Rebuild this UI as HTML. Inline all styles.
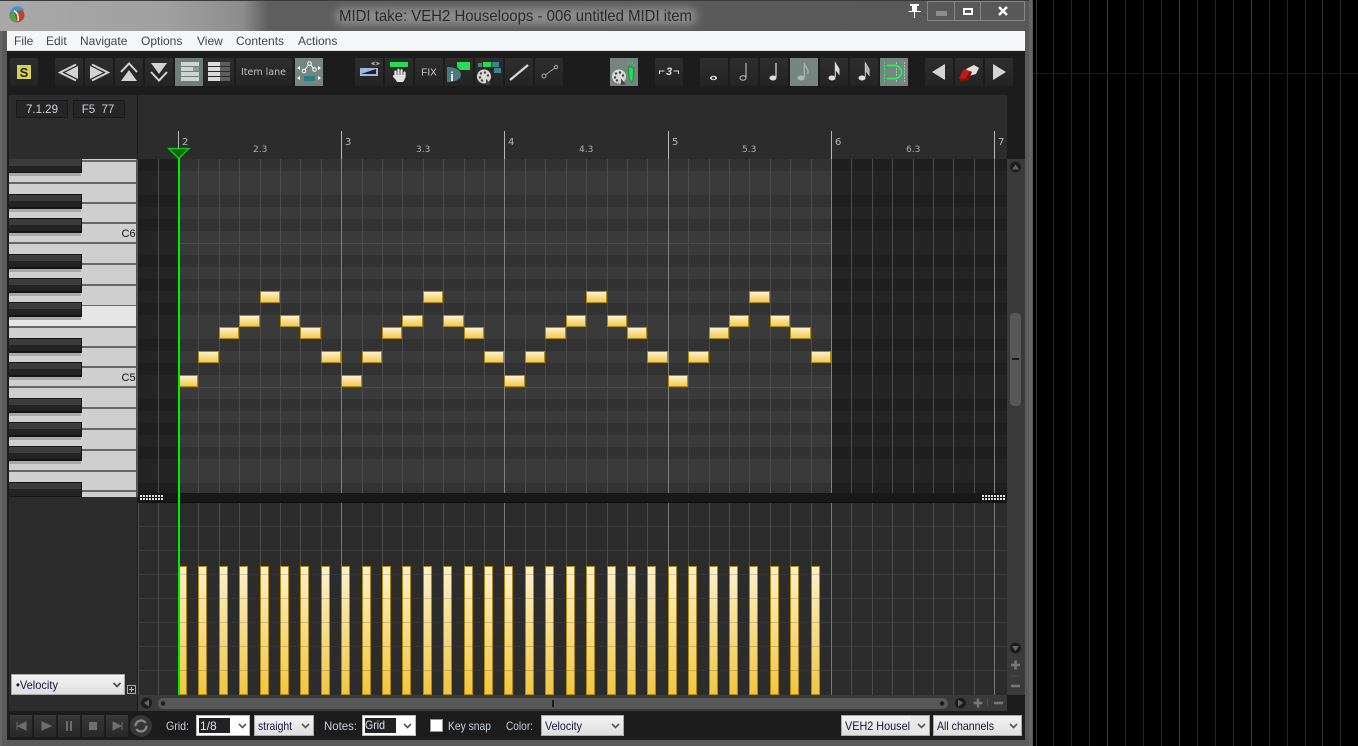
<!DOCTYPE html>
<html><head><meta charset="utf-8"><title>MIDI take</title>
<style>
html,body{margin:0;padding:0;background:#000;width:1358px;height:746px;overflow:hidden}
svg{display:block;position:absolute;left:0;top:0}
text{font-family:"Liberation Sans",sans-serif}
.c{shape-rendering:crispEdges}
.n{fill:url(#ng);stroke:#b08a10;stroke-width:1}
.v{fill:url(#vg);stroke:#b08a10;stroke-width:1}
.b{fill:url(#bg)}
.a{fill:#75857f}
.m{font-size:12px;fill:#444}
.r{font-family:"DejaVu Sans",sans-serif;font-size:9px;fill:#b0b0b0}
.q{font-family:"DejaVu Sans",sans-serif;font-size:10px;fill:#b8b8b8}
.l{font-size:12px;fill:#c8d0d8}
.s{font-size:12px;fill:#14143c}
</style></head><body>
<svg width="1358" height="746" viewBox="0 0 1358 746" xmlns="http://www.w3.org/2000/svg">
<defs>
<linearGradient id="ng" x1="0" y1="0" x2="0" y2="1"><stop offset="0" stop-color="#fdf2cc"/><stop offset="1" stop-color="#f1c94e"/></linearGradient>
<linearGradient id="vg" x1="0" y1="0" x2="0" y2="1"><stop offset="0" stop-color="#fcf1cc"/><stop offset="1" stop-color="#f1c63f"/></linearGradient>
<linearGradient id="bg" x1="0" y1="0" x2="0" y2="1"><stop offset="0" stop-color="#2e2e2e"/><stop offset="1" stop-color="#242424"/></linearGradient>
<linearGradient id="sel" x1="0" y1="0" x2="0" y2="1"><stop offset="0" stop-color="#f4f4f4"/><stop offset="1" stop-color="#dedede"/></linearGradient>
<linearGradient id="tb" x1="0" y1="0" x2="1" y2="0"><stop offset="0" stop-color="#a8a8a8"/><stop offset=".16" stop-color="#a0a0a0"/><stop offset=".235" stop-color="#8c8c8c"/><stop offset=".26" stop-color="#5e5e5e"/><stop offset="1" stop-color="#585858"/></linearGradient>
<linearGradient id="tr" x1="0" y1="0" x2="0" y2="1"><stop offset="0" stop-color="#383838"/><stop offset="1" stop-color="#282828"/></linearGradient>
<filter id="gl" x="-10%" y="-100%" width="120%" height="300%"><feGaussianBlur stdDeviation="4"/></filter>
<g id="bk" class="c"><rect x="9" y="14" width="72" height="4" fill="#a8a8a8"/><rect x="9" y="0" width="73" height="15" fill="#161616"/><rect x="9" y="1" width="72" height="6" fill="#3c3c3c"/><rect x="9" y="7" width="72" height="6" fill="#232323"/></g>
<g id="pal"><ellipse cx="0" cy="0" rx="7" ry="7" fill="#d8d8d8"/><circle cx="-3" cy="-3" r="1.200" fill="#444"/><circle cx="1" cy="-4" r="1.200" fill="#444"/><circle cx="-4" cy="1" r="1.200" fill="#444"/><circle cx="-2" cy="4" r="1.200" fill="#444"/><circle cx="4" cy="-1" r="1.200" fill="#444"/><path d="M2 2l5 6h-5z" fill="#444"/></g>
</defs>

<!-- desktop right -->
<rect width="1358" height="746" fill="#000"/>
<path class="c" stroke="#272727" d="M1053.500 0V746M1071.500 0V746M1089.500 0V746M1125.500 0V746M1143.500 0V746M1161.500 0V746M1197.500 0V746M1215.500 0V746M1233.500 0V746M1269.500 0V746M1287.500 0V746M1305.500 0V746M1340.500 0V746"/>
<path class="c" stroke="#363636" d="M1036.500 0V746M1107.500 0V746M1179.500 0V746M1251.500 0V746M1322.500 0V746"/>
<path class="c" stroke="#1b1b1b" d="M1033 73.500H1358"/>

<!-- window frame -->
<rect x="0" y="0" width="1033" height="746" fill="#5a5a5a" class="c"/>
<rect x="0" y="0" width="1033" height="31" fill="url(#tb)" class="c"/>
<rect x="0" y="0" width="1033" height="1" fill="#3a3a3a" class="c"/>
<rect x="1029" y="0" width="3" height="746" fill="#666" class="c"/>
<rect x="0" y="31" width="2" height="715" fill="#666" class="c"/>
<!-- title -->
<rect x="335" y="8" width="362" height="17" rx="8" fill="#8a8a8a" filter="url(#gl)"/>
<text x="339" y="21" font-size="16" fill="#2a2a2a" textLength="353" lengthAdjust="spacingAndGlyphs">MIDI take: VEH2 Houseloops - 006 untitled MIDI item</text>
<!-- app icon -->
<circle cx="17" cy="15" r="7.500" fill="#b04a30"/>
<path d="M10 13a7.500 7.500 0 0 1 14-3l-8 1z" fill="#3a9ad0"/>
<path d="M10 14c0 5 3 8 7 8l-3-10z" fill="#3fae49"/>
<path d="M14 11c3 1 5 5 4 10" stroke="#eee" stroke-width="1.500" fill="none"/>
<!-- pin -->
<path d="M908.500 11.500H921M914.500 11V18" stroke="#fff" stroke-width="1.400" fill="none" class="c"/>
<rect x="910" y="4" width="9" height="2" fill="#fff" class="c"/>
<rect x="912" y="5" width="5" height="6" fill="#fff" class="c"/>
<!-- window controls -->
<g class="c" fill="none" stroke="#888"><rect x="927.500" y="1.500" width="27" height="19"/><rect x="954.500" y="1.500" width="26" height="19"/><rect x="980.500" y="1.500" width="44" height="19"/></g>
<rect x="936" y="11" width="11" height="5" fill="#8c8c8c" class="c"/>
<rect x="964" y="9" width="8" height="5" fill="none" stroke="#fff" stroke-width="2" class="c"/>
<path d="M999 7l8 8M1007 7l-8 8" stroke="#fff" stroke-width="2.400"/>

<!-- menu -->
<rect x="7" y="31" width="1018" height="19" fill="#f5f6f8" class="c"/>
<rect x="7" y="50" width="1018" height="1" fill="#e2e2e2" class="c"/>
<text class="m" x="14" y="45">File</text><text class="m" x="46" y="45">Edit</text><text class="m" x="80" y="45">Navigate</text><text class="m" x="141" y="45">Options</text><text class="m" x="197" y="45">View</text><text class="m" x="236" y="45">Contents</text><text class="m" x="298" y="45">Actions</text>

<!-- body -->
<rect x="7" y="51" width="1018" height="689" fill="#1c1c1c" class="c"/>
<rect x="9" y="95" width="998" height="616" fill="#2c2c2c" class="c"/>

<!-- toolbar buttons -->
<g class="c">
<rect class="b" x="10" y="58" width="28" height="28"/><rect class="b" x="55" y="58" width="28" height="28"/><rect class="b" x="85" y="58" width="28" height="28"/><rect class="b" x="115" y="58" width="28" height="28"/><rect class="b" x="145" y="58" width="28" height="28"/>
<rect x="175" y="58" width="28" height="28" fill="#6e7e79"/><rect class="b" x="204" y="58" width="30" height="28"/>
<rect class="b" x="236" y="58" width="56" height="28"/><rect class="a" x="295" y="58" width="28" height="28"/>
<rect class="b" x="355" y="58" width="28" height="28"/><rect class="b" x="385" y="58" width="28" height="28"/><rect class="b" x="415" y="58" width="28" height="28"/><rect class="b" x="445" y="58" width="28" height="28"/><rect class="b" x="475" y="58" width="28" height="28"/><rect class="b" x="505" y="58" width="28" height="28"/><rect class="b" x="535" y="58" width="28" height="28"/>
<rect class="a" x="610" y="58" width="28" height="28"/><rect class="b" x="655" y="58" width="28" height="28"/>
<rect class="b" x="700" y="58" width="28" height="28"/><rect class="b" x="730" y="58" width="28" height="28"/><rect class="b" x="760" y="58" width="28" height="28"/><rect class="a" x="790" y="58" width="28" height="28"/><rect class="b" x="820" y="58" width="28" height="28"/><rect class="b" x="850" y="58" width="28" height="28"/><rect class="a" x="880" y="58" width="28" height="28"/>
<rect class="b" x="925" y="58" width="28" height="28"/><rect class="b" x="955" y="58" width="28" height="28"/><rect class="b" x="985" y="58" width="28" height="28"/>
</g>
<!-- S -->
<rect x="17" y="65" width="14" height="14" fill="#d9d24e" class="c"/>
<text x="24" y="77" font-size="13" font-weight="bold" text-anchor="middle" fill="#222">S</text>
<!-- arrows -->
<g fill="#d2d2d2" stroke="none">
<path d="M78 66l-13 6.500 13 6.500z"/><path d="M90 66l13 6.500-13 6.500z"/>
<path d="M121 81h16l-8-11z"/><path d="M151 63h16l-8 11z"/>
</g>
<g fill="none" stroke="#d2d2d2" stroke-width="2">
<path d="M76 64.500l-16 8 16 8"/><path d="M92 64.500l16 8-16 8"/>
<path d="M121 72l8-8.500 8 8.500"/><path d="M151 72l8 8.500 8-8.500"/>
</g>
<!-- piano view -->
<g class="c">
<rect x="181" y="62" width="18" height="4" fill="#ced4d0"/><rect x="181" y="67" width="12" height="4" fill="#ced4d0"/><rect x="181" y="72" width="18" height="4" fill="#ced4d0"/><rect x="181" y="77" width="18" height="4" fill="#ced4d0"/><rect x="193" y="67" width="6" height="4" fill="#8f9b97"/>
<rect x="208" y="62" width="12" height="4" fill="#dcdcdc"/><rect x="208" y="67" width="12" height="4" fill="#dcdcdc"/><rect x="208" y="72" width="12" height="4" fill="#dcdcdc"/><rect x="208" y="77" width="12" height="4" fill="#dcdcdc"/>
<rect x="220" y="62" width="10" height="4" fill="#5e5e5e"/><rect x="220" y="67" width="10" height="4" fill="#5e5e5e"/><rect x="220" y="72" width="10" height="4" fill="#5e5e5e"/><rect x="220" y="77" width="10" height="4" fill="#5e5e5e"/>
</g>
<text x="241" y="75" style="font-family:'DejaVu Sans',sans-serif" font-size="9.500" fill="#c0c0c0" textLength="45">Item lane</text>
<!-- env -->
<path d="M304 71L309.500 63.500L314.500 69.500" stroke="#fff" fill="none"/><circle cx="304" cy="71" r="1.800" fill="#75857f" stroke="#fff"/><circle cx="309.500" cy="63.500" r="1.800" fill="#75857f" stroke="#fff"/><circle cx="314.500" cy="69.500" r="1.800" fill="#75857f" stroke="#fff"/>
<path d="M300 66l-3 2 3 2zM318 66l3 2-3 2zM300 76l-3 2 3 2zM318 76l3 2-3 2z" fill="#fff"/>
<rect x="304" y="76" width="11" height="5" fill="#2f7f80" class="c"/>
<!-- eye + stairs -->
<rect x="360" y="68" width="18" height="8" fill="#9fb6de" class="c"/><path d="M361 74l15-5v5z" fill="#202020"/>
<path d="M371 63.500q4-3.500 9 0q-5 3.500-9 0z" fill="#aaa"/><circle cx="375.500" cy="63.500" r="1.300" fill="#222"/>
<!-- hand -->
<rect x="390" y="62" width="18" height="5" fill="#22dd55" class="c"/>
<g stroke="#e2e2e2" stroke-width="2.300" stroke-linecap="round" fill="none"><path d="M395.500 77V71.500M398.500 77V69.800M401.500 77V70.300M404.500 77V72.500"/></g>
<path d="M394.500 75h11c0 3-1 5-2.500 7h-6c-1-2-2-3-4-6.500z" fill="#e2e2e2"/>
<path d="M393.500 75.500l2.500 3" stroke="#e2e2e2" stroke-width="2.200"/>
<text x="429" y="75.500" font-size="10" text-anchor="middle" fill="#c8c8c8">FIX</text>
<!-- i -->
<path d="M447 82V67C455 67 461 70 461 75C461 79 456 82 447 82z" fill="#4a7a7c"/>
<path d="M457 62h13v8h-10l-3-3z" fill="#22dd55"/>
<text x="452" y="81" font-size="13" font-weight="bold" text-anchor="middle" fill="#f0f0f0">i</text>
<!-- palette chips -->
<g class="c"><rect x="478" y="63" width="4" height="4" fill="#3f8587"/><rect x="483" y="62" width="8" height="5" fill="#22dd55"/><rect x="492" y="62" width="7" height="5" fill="#3f8587"/><rect x="494" y="68" width="7" height="5" fill="#3f8587"/></g>
<use href="#pal" x="484" y="76.500"/>
<!-- lines -->
<path d="M510 80l18-15" stroke="#d8d8d8" stroke-width="2.200"/>
<path d="M544 76l12-9" stroke="#999" stroke-width="1"/><circle cx="544" cy="76" r="2" fill="#262626" stroke="#aaa"/><circle cx="556" cy="67" r="1.600" fill="#262626" stroke="#aaa"/>
<!-- palette foot -->
<use href="#pal" x="619" y="76.500"/>
<path d="M629 67c4-1 5 2 4.500 6-.5 4 .5 7-1.500 9-3-1-3-4-3-7 0-3-1.500-6 0-8z" fill="#22dd55" stroke="#1a8f3a"/>
<path d="M627 64h1M629.500 62.500h1M632 63h1M634 65h1" stroke="#3ddf6a" stroke-width="1.500"/>
<!-- triplet -->
<path d="M659.500 74v-3h5M678.500 74v-3h-5" stroke="#ddd" fill="none" class="c"/>
<text x="669" y="75" font-size="11" font-weight="bold" font-style="italic" text-anchor="middle" fill="#ddd">3</text>
<!-- notes -->
<ellipse cx="713.500" cy="78" rx="3.500" ry="2.200" fill="#ddd"/><ellipse cx="713.500" cy="78" rx="1.500" ry="1.300" fill="#333"/>
<ellipse cx="743" cy="78" rx="3" ry="2.200" fill="none" stroke="#bbb"/><path d="M746 77V63" stroke="#ccc"/>
<ellipse cx="773" cy="78" rx="3.500" ry="2.500" fill="#ddd"/><path d="M776 77V63" stroke="#ddd" stroke-width="1.200"/>
<ellipse cx="801" cy="78" rx="3.500" ry="2.500" fill="#b0b8b4"/><path d="M804.300 77V63c0 4 5 5 3.500 11" stroke="#b0b8b4" stroke-width="1.200" fill="none"/>
<ellipse cx="832" cy="78" rx="3.500" ry="2.500" fill="#ddd"/><path d="M835.300 77V63l3.700 6v5l-3.700-5z" stroke="#ddd" fill="#ddd"/>
<ellipse cx="862" cy="78" rx="3.500" ry="2.500" fill="#ddd"/><path d="M865.300 77V63l3.700 6v6l-3.700-5z" stroke="#ccc" fill="#aaa"/>
<!-- snap -->
<path d="M884.500 62V82" stroke="#3ddf6a" stroke-dasharray="2 1" fill="none"/>
<path d="M896.500 62V82M904.500 62V82" stroke="#b4c0bc" stroke-dasharray="2 1" fill="none"/>
<path d="M887 65.500h8a6.500 6.500 0 0 1 0 13h-8" stroke="#22ee55" stroke-width="2" fill="none"/>
<!-- left, eraser, right -->
<path d="M932 72l13-8v16z" fill="#d4d4d4"/>
<path d="M966 69l8-4 5 3-3 6-7 2z" fill="#e0e0e0"/><path d="M959 78l5-9 8 3-4 8-7 1z" fill="#cc1515"/><path d="M961 81l7-1 4-8-2-1-5 8-5-1z" fill="#8c0f0f"/>
<path d="M993 64l13 8-13 8z" fill="#d4d4d4"/>

<!-- readouts -->
<g class="c"><rect x="16.500" y="100.500" width="51" height="17" fill="#262626" stroke="#1a1a1a"/><rect x="73.500" y="100.500" width="51" height="17" fill="#262626" stroke="#1a1a1a"/></g>
<text x="42" y="113" font-size="11.500" text-anchor="middle" fill="#c8d4dc">7.1.29</text>
<text x="98" y="113" font-size="11.500" text-anchor="middle" fill="#c8d4dc" xml:space="preserve">F5  77</text>

<!-- left panel + piano -->
<rect x="137" y="95" width="1" height="616" fill="#1a1a1a" class="c"/>
<rect x="9" y="159" width="127" height="338" fill="#cfcfcf" class="c"/>
<rect x="136" y="159" width="2" height="338" fill="#555" class="c"/>
<rect x="9" y="306" width="127" height="21" fill="#e6e6e6" class="c"/>
<g class="c" fill="#666">
<rect x="81" y="160" width="55" height="2"/><rect x="9" y="182" width="127" height="2"/><rect x="81" y="202" width="55" height="2"/><rect x="81" y="222" width="55" height="2"/><rect x="9" y="242" width="127" height="2"/><rect x="81" y="263" width="55" height="2"/><rect x="81" y="284" width="55" height="2"/><rect x="81" y="305" width="55" height="1"/><rect x="9" y="326" width="127" height="2"/><rect x="81" y="346" width="55" height="2"/><rect x="81" y="366" width="55" height="2"/><rect x="9" y="386" width="127" height="2"/><rect x="81" y="407" width="55" height="2"/><rect x="81" y="428" width="55" height="2"/><rect x="81" y="449" width="55" height="2"/><rect x="9" y="470" width="127" height="2"/><rect x="81" y="490" width="55" height="2"/>
</g>
<g class="c"><rect x="9" y="159" width="73" height="14" fill="#161616"/><rect x="9" y="159" width="72" height="7" fill="#3c3c3c"/><rect x="9" y="166" width="72" height="6" fill="#232323"/><rect x="9" y="173" width="72" height="3" fill="#a8a8a8"/></g>
<use href="#bk" y="194"/><use href="#bk" y="218"/><use href="#bk" y="254"/><use href="#bk" y="278"/><use href="#bk" y="302"/><use href="#bk" y="338"/><use href="#bk" y="362"/><use href="#bk" y="398"/><use href="#bk" y="422"/><use href="#bk" y="446"/>
<g class="c"><rect x="9" y="482" width="73" height="15" fill="#161616"/><rect x="9" y="483" width="72" height="6" fill="#3c3c3c"/><rect x="9" y="489" width="72" height="7" fill="#232323"/></g>
<text x="121.500" y="237" font-size="11" fill="#111">C6</text>
<text x="121.500" y="381" font-size="11" fill="#111">C5</text>

<!-- piano roll background -->
<g class="c">
<rect x="138" y="159" width="869" height="334" fill="#242424"/>
<rect x="178" y="159" width="653" height="334" fill="#3a3a3a"/>
<g fill="#000" fill-opacity=".12">
<rect x="138" y="159" width="869" height="12"/><rect x="138" y="195" width="869" height="12"/><rect x="138" y="219" width="869" height="12"/><rect x="138" y="255" width="869" height="12"/><rect x="138" y="279" width="869" height="12"/><rect x="138" y="303" width="869" height="12"/><rect x="138" y="339" width="869" height="12"/><rect x="138" y="363" width="869" height="12"/><rect x="138" y="399" width="869" height="12"/><rect x="138" y="423" width="869" height="12"/><rect x="138" y="447" width="869" height="12"/><rect x="138" y="483" width="869" height="10"/>
</g>
<path stroke="#4c4c4c" d="M178 243.500H831M178 387.500H831"/>
<path stroke="#4c4c4c" d="M158.500 159V493M198.500 159V493M219.500 159V493M239.500 159V493M260.500 159V493M280.500 159V493M300.500 159V493M321.500 159V493M362.500 159V493M382.500 159V493M402.500 159V493M423.500 159V493M443.500 159V493M464.500 159V493M484.500 159V493M525.500 159V493M545.500 159V493M566.500 159V493M586.500 159V493M607.500 159V493M627.500 159V493M647.500 159V493M688.500 159V493M709.500 159V493M729.500 159V493M749.500 159V493M770.500 159V493M790.500 159V493M811.500 159V493M851.500 159V493M872.500 159V493M892.500 159V493M913.500 159V493M933.500 159V493M953.500 159V493M974.500 159V493"/>
<path stroke="#808080" d="M341.500 159V493M504.500 159V493M668.500 159V493M831.500 159V493M994.500 159V493"/>

<!-- ruler lines -->
<path stroke="#b8b8b8" d="M178.500 131V159M341.500 131V159M504.500 131V159M668.500 131V159M831.500 131V159M994.500 131V159"/>
<!-- separator -->
<rect x="138" y="493" width="869" height="9" fill="#181818"/>
<rect x="138" y="502" width="869" height="1" fill="#0c0c0c"/>
<path stroke="#e0e0e0" stroke-width="2" stroke-dasharray="2 1" d="M140 496H163M140 499H163M982 496H1005M982 499H1005"/>

<!-- velocity lane bg -->
<rect x="138" y="503" width="869" height="192" fill="#2c2c2c"/>
<path stroke="#3f3f3f" d="M138 526.500H1007M138 550.500H1007M138 574.500H1007M138 598.500H1007M138 622.500H1007M138 646.500H1007M138 670.500H1007"/>
<path stroke="#4c4c4c" d="M158.500 503V695M198.500 503V695M219.500 503V695M239.500 503V695M260.500 503V695M280.500 503V695M300.500 503V695M321.500 503V695M362.500 503V695M382.500 503V695M402.500 503V695M423.500 503V695M443.500 503V695M464.500 503V695M484.500 503V695M525.500 503V695M545.500 503V695M566.500 503V695M586.500 503V695M607.500 503V695M627.500 503V695M647.500 503V695M688.500 503V695M709.500 503V695M729.500 503V695M749.500 503V695M770.500 503V695M790.500 503V695M811.500 503V695M851.500 503V695M872.500 503V695M892.500 503V695M913.500 503V695M933.500 503V695M953.500 503V695M974.500 503V695"/>
<path stroke="#777" d="M341.500 503V695M504.500 503V695M668.500 503V695M831.500 503V695M994.500 503V695"/>
<rect x="138" y="503" width="1" height="192" fill="#555"/>

<!-- notes -->
<rect class="n" x="178.500" y="375.500" width="19" height="11"/><rect class="n" x="198.500" y="351.500" width="20" height="11"/><rect class="n" x="219.500" y="327.500" width="19" height="11"/><rect class="n" x="239.500" y="315.500" width="20" height="11"/><rect class="n" x="260.500" y="291.500" width="19" height="11"/><rect class="n" x="280.500" y="315.500" width="19" height="11"/><rect class="n" x="300.500" y="327.500" width="20" height="11"/><rect class="n" x="321.500" y="351.500" width="19" height="11"/>
<rect class="n" x="341.500" y="375.500" width="20" height="11"/><rect class="n" x="362.500" y="351.500" width="19" height="11"/><rect class="n" x="382.500" y="327.500" width="19" height="11"/><rect class="n" x="402.500" y="315.500" width="20" height="11"/><rect class="n" x="423.500" y="291.500" width="19" height="11"/><rect class="n" x="443.500" y="315.500" width="20" height="11"/><rect class="n" x="464.500" y="327.500" width="19" height="11"/><rect class="n" x="484.500" y="351.500" width="19" height="11"/>
<rect class="n" x="504.500" y="375.500" width="20" height="11"/><rect class="n" x="525.500" y="351.500" width="19" height="11"/><rect class="n" x="545.500" y="327.500" width="20" height="11"/><rect class="n" x="566.500" y="315.500" width="19" height="11"/><rect class="n" x="586.500" y="291.500" width="20" height="11"/><rect class="n" x="607.500" y="315.500" width="19" height="11"/><rect class="n" x="627.500" y="327.500" width="19" height="11"/><rect class="n" x="647.500" y="351.500" width="20" height="11"/>
<rect class="n" x="668.500" y="375.500" width="19" height="11"/><rect class="n" x="688.500" y="351.500" width="20" height="11"/><rect class="n" x="709.500" y="327.500" width="19" height="11"/><rect class="n" x="729.500" y="315.500" width="19" height="11"/><rect class="n" x="749.500" y="291.500" width="20" height="11"/><rect class="n" x="770.500" y="315.500" width="19" height="11"/><rect class="n" x="790.500" y="327.500" width="20" height="11"/><rect class="n" x="811.500" y="351.500" width="19" height="11"/>

<!-- velocity bars -->
<g>
<rect class="v" x="178.500" y="566.500" width="8" height="128"/><rect class="v" x="198.500" y="566.500" width="8" height="128"/><rect class="v" x="219.500" y="566.500" width="8" height="128"/><rect class="v" x="239.500" y="566.500" width="8" height="128"/><rect class="v" x="260.500" y="566.500" width="8" height="128"/><rect class="v" x="280.500" y="566.500" width="8" height="128"/><rect class="v" x="300.500" y="566.500" width="8" height="128"/><rect class="v" x="321.500" y="566.500" width="8" height="128"/>
<rect class="v" x="341.500" y="566.500" width="8" height="128"/><rect class="v" x="362.500" y="566.500" width="8" height="128"/><rect class="v" x="382.500" y="566.500" width="8" height="128"/><rect class="v" x="402.500" y="566.500" width="8" height="128"/><rect class="v" x="423.500" y="566.500" width="8" height="128"/><rect class="v" x="443.500" y="566.500" width="8" height="128"/><rect class="v" x="464.500" y="566.500" width="8" height="128"/><rect class="v" x="484.500" y="566.500" width="8" height="128"/>
<rect class="v" x="504.500" y="566.500" width="8" height="128"/><rect class="v" x="525.500" y="566.500" width="8" height="128"/><rect class="v" x="545.500" y="566.500" width="8" height="128"/><rect class="v" x="566.500" y="566.500" width="8" height="128"/><rect class="v" x="586.500" y="566.500" width="8" height="128"/><rect class="v" x="607.500" y="566.500" width="8" height="128"/><rect class="v" x="627.500" y="566.500" width="8" height="128"/><rect class="v" x="647.500" y="566.500" width="8" height="128"/>
<rect class="v" x="668.500" y="566.500" width="8" height="128"/><rect class="v" x="688.500" y="566.500" width="8" height="128"/><rect class="v" x="709.500" y="566.500" width="8" height="128"/><rect class="v" x="729.500" y="566.500" width="8" height="128"/><rect class="v" x="749.500" y="566.500" width="8" height="128"/><rect class="v" x="770.500" y="566.500" width="8" height="128"/><rect class="v" x="790.500" y="566.500" width="8" height="128"/><rect class="v" x="811.500" y="566.500" width="8" height="128"/>
</g>
<path stroke="#000" stroke-opacity=".16" d="M178 574.500H820M178 598.500H820M178 622.500H820M178 646.500H820M178 670.500H820"/>

<!-- green cursor -->
<rect x="178" y="151" width="2" height="544" fill="#00ee00"/>
</g>
<path d="M168.500 148.500H189L178.700 158.500z" fill="#0b6a0b" stroke="#0fd00f" stroke-width="1.300"/>

<!-- ruler labels -->
<text class="q" x="182" y="145">2</text><text class="q" x="345" y="145">3</text><text class="q" x="508" y="145">4</text><text class="q" x="672" y="145">5</text><text class="q" x="835" y="145">6</text><text class="q" x="998" y="145">7</text>
<text class="r" x="253" y="152">2.3</text><text class="r" x="416" y="152">3.3</text><text class="r" x="579" y="152">4.3</text><text class="r" x="742" y="152">5.3</text><text class="r" x="906" y="152">6.3</text>

<!-- v scrollbar -->
<g class="c"><rect x="1007" y="95" width="18" height="64" fill="#1c1c1c"/><rect x="1007" y="159" width="18" height="536" fill="#3a3a3a"/></g>
<circle cx="1015.500" cy="167" r="5.500" fill="#1c1c1c"/><path d="M1012 169.500h7l-3.500-5z" fill="#666"/>
<rect x="1010" y="313" width="11" height="93" rx="4" fill="#585858"/>
<rect x="1012" y="358" width="7" height="2" fill="#1c1c1c" class="c"/>
<circle cx="1015.500" cy="648" r="5.500" fill="#1c1c1c"/><path d="M1012 646h7l-3.500 5z" fill="#666"/>
<path d="M1015.500 660.500v9M1011 665h9" stroke="#777" stroke-width="2.500"/>
<path d="M1011 676h9" stroke="#4e4e4e" stroke-width="1"/>
<path d="M1011 686h9" stroke="#777" stroke-width="2.500"/>

<!-- h scrollbar -->
<rect x="138" y="695" width="869" height="16" fill="#3a3a3a" class="c"/>
<circle cx="146.500" cy="703" r="5.500" fill="#1c1c1c"/><path d="M149 699.500v7l-5-3.500z" fill="#666"/>
<rect x="158" y="698" width="790" height="11" rx="5" fill="#585858"/>
<circle cx="163" cy="703.500" r="2.200" fill="#1c1c1c"/><circle cx="942" cy="703.500" r="2.200" fill="#1c1c1c"/>
<rect x="552" y="700" width="2" height="7" fill="#1c1c1c" class="c"/>
<circle cx="960.500" cy="703" r="5.500" fill="#1c1c1c"/><path d="M958 699.500v7l5-3.500z" fill="#666"/>
<path d="M978 698.500v9M973.500 703h9" stroke="#777" stroke-width="2.500"/>
<path d="M987.500 699v8" stroke="#4e4e4e"/>
<path d="M994 703h9" stroke="#777" stroke-width="2.500"/>

<!-- velocity select -->
<rect x="11.500" y="674.500" width="113" height="20" fill="url(#sel)" stroke="#aaa" class="c"/>
<text class="s" x="16" y="689" textLength="42" lengthAdjust="spacingAndGlyphs">•Velocity</text>
<path d="M113.500 683l3.500 3.500 3.500-3.500" fill="none" stroke="#444" stroke-width="1.600"/>
<rect x="127.500" y="685.500" width="8" height="8" fill="none" stroke="#aaa" class="c"/>
<path d="M131.500 687v5M129 689.500h5" stroke="#bbb" class="c"/>

<!-- transport -->
<g class="c"><rect x="10" y="715" width="22" height="22" fill="url(#tr)"/><rect x="34" y="715" width="22" height="22" fill="url(#tr)"/><rect x="58" y="715" width="22" height="22" fill="url(#tr)"/><rect x="82" y="715" width="22" height="22" fill="url(#tr)"/><rect x="106" y="715" width="22" height="22" fill="url(#tr)"/></g>
<path d="M17 722v8M26 722l-8 4 8 4zM42 722l9 4-9 4zM113 722l8 4-8 4zM122 722v8" fill="#6e6e6e" stroke="#6e6e6e" stroke-width="1"/>
<g class="c" fill="#6e6e6e"><rect x="66" y="721" width="2" height="10"/><rect x="70" y="721" width="2" height="10"/><rect x="89" y="722" width="8" height="8"/></g>
<circle cx="141" cy="726" r="11" fill="#363636"/>
<circle cx="141" cy="726" r="5.500" fill="none" stroke="#8a8a8a" stroke-width="2.200" stroke-dasharray="14 3"/>

<!-- bottom controls -->
<text class="l" x="166" y="730" textLength="23" lengthAdjust="spacingAndGlyphs">Grid:</text>
<rect x="196.500" y="715.500" width="53" height="20" fill="#fff" stroke="#bbb" class="c"/>
<rect x="199" y="718" width="31" height="15" fill="#222" class="c"/>
<text x="200" y="730" font-size="12" fill="#dfe6f0">1/8</text>
<path d="M239 724l3.500 3.500 3.500-3.500" fill="none" stroke="#555" stroke-width="1.600"/>

<rect x="254.500" y="715.500" width="59" height="20" fill="url(#sel)" stroke="#aaa" class="c"/>
<text class="s" x="258" y="730" textLength="34" lengthAdjust="spacingAndGlyphs">straight</text>
<path d="M302 724l3.500 3.500 3.500-3.500" fill="none" stroke="#555" stroke-width="1.600"/>

<text class="l" x="324" y="730" textLength="33" lengthAdjust="spacingAndGlyphs">Notes:</text>
<rect x="362.500" y="715.500" width="53" height="20" fill="#fff" stroke="#bbb" class="c"/>
<rect x="365" y="718" width="31" height="15" fill="#222" class="c"/>
<text x="365" y="729" font-size="12" fill="#dfe6f0" textLength="20" lengthAdjust="spacingAndGlyphs">Grid</text>
<path d="M404 724l3.500 3.500 3.500-3.500" fill="none" stroke="#555" stroke-width="1.600"/>

<rect x="430.500" y="719.500" width="12" height="12" fill="#fff" stroke="#999" class="c"/>
<text class="l" x="448" y="730" textLength="43" lengthAdjust="spacingAndGlyphs">Key snap</text>
<text class="l" x="506" y="730" textLength="27" lengthAdjust="spacingAndGlyphs">Color:</text>
<rect x="541.500" y="715.500" width="82" height="20" fill="url(#sel)" stroke="#aaa" class="c"/>
<text class="s" x="545" y="730" textLength="37" lengthAdjust="spacingAndGlyphs">Velocity</text>
<path d="M612 724l3.500 3.500 3.500-3.500" fill="none" stroke="#555" stroke-width="1.600"/>

<rect x="841.500" y="715.500" width="88" height="20" fill="url(#sel)" stroke="#aaa" class="c"/>
<text class="s" x="845" y="730" textLength="65" lengthAdjust="spacingAndGlyphs">VEH2 Housel</text>
<rect x="910" y="716" width="19" height="19" fill="#e8e8e8" class="c"/>
<rect x="930" y="715" width="3" height="21" fill="#1c1c1c" class="c"/>
<path d="M918 724l3.500 3.500 3.500-3.500" fill="none" stroke="#555" stroke-width="1.600"/>

<rect x="933.500" y="715.500" width="88" height="20" fill="url(#sel)" stroke="#aaa" class="c"/>
<text class="s" x="937" y="730" textLength="57" lengthAdjust="spacingAndGlyphs">All channels</text>
<path d="M1010 724l3.500 3.500 3.500-3.500" fill="none" stroke="#555" stroke-width="1.600"/>
</svg>
</body></html>
